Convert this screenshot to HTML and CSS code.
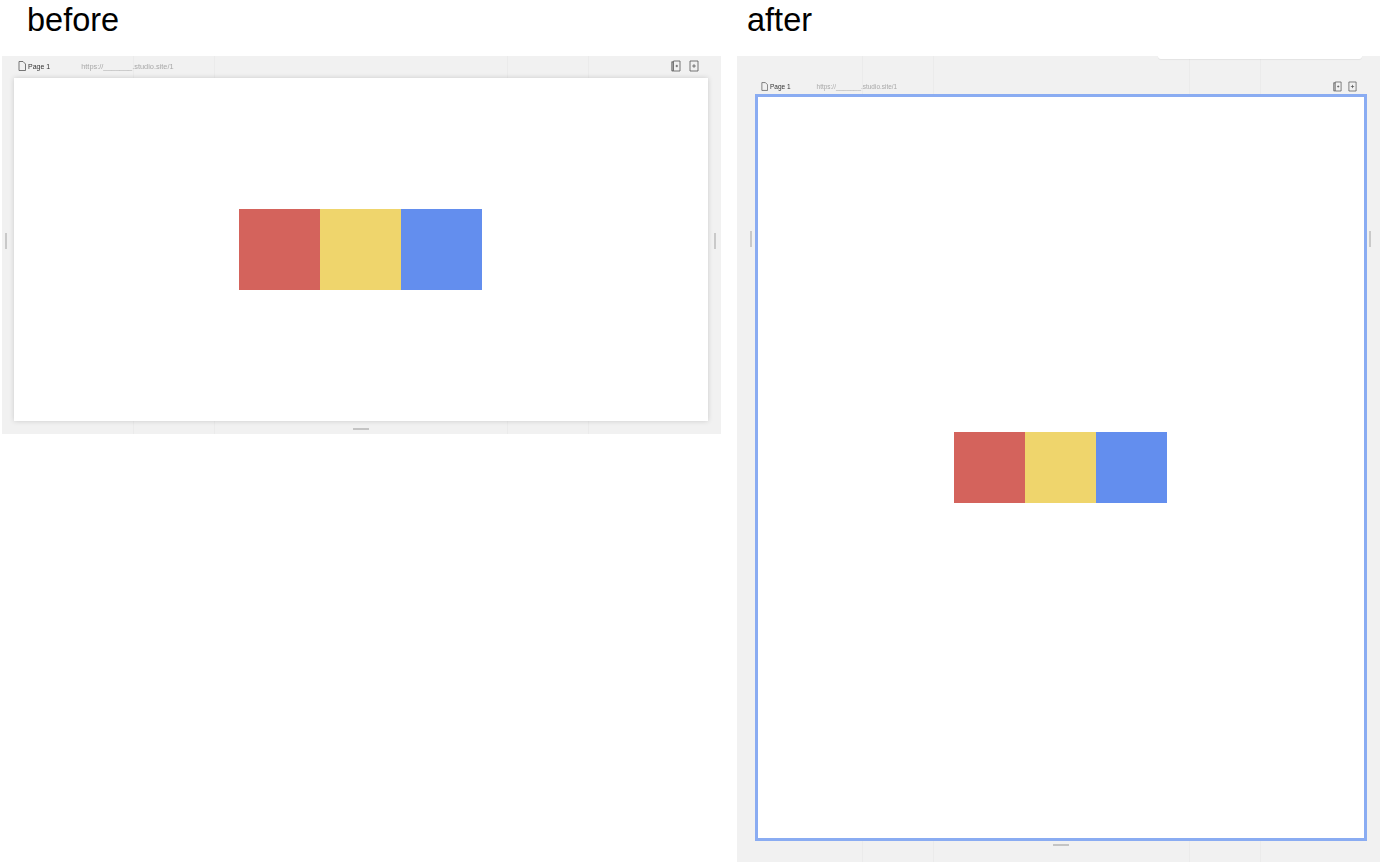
FILE: index.html
```html
<!DOCTYPE html>
<html lang="en">

<head>
	<meta charset="UTF-8">
	<meta name="viewport" content="width=device-width, initial-scale=1.0">
	<title>before / after</title>
	<link rel="stylesheet" href="styles.css">
</head>

<body>
	<div class="compare">
		<!-- before -->
		<section class="col">
			<h2 class="title">before</h2>
			<div class="panel panel-before">
				<div class="bar">
					<svg class="page-icon" viewBox="0 0 8 10"><path d="M1 .5h4l2.500 2.500v6.500h-6.500z"/></svg>
					<span class="page-name">Page 1</span>
					<span class="page-url">https://_______.studio.site/1</span>
					<div class="actions">
						<svg class="act" viewBox="0 0 10 12"><path d="M2.500 1h6.500v10h-6.500z"/><path d="M2.500 2h-1.500v8.500l1.500 .5" class="thick"/><path d="M5.800 4.800v2.400M4.600 6h2.400"/></svg>
						<svg class="act" viewBox="0 0 10 12"><path d="M1 1h8v10h-8z"/><path d="M5 4.200v3.600M3.200 6h3.600"/></svg>
					</div>
				</div>
				<div class="stage">
					<div class="side side-l"><i class="grip"></i></div>
					<div class="canvas">
						<div class="block red"></div>
						<div class="block yellow"></div>
						<div class="block blue"></div>
					</div>
					<div class="side side-r"><i class="grip"></i></div>
				</div>
				<div class="foot"><i class="grip-h"></i></div>
			</div>
		</section>

		<!-- after -->
		<section class="col">
			<h2 class="title">after</h2>
			<div class="panel panel-after">
				<div class="top-tab"></div>
				<div class="bar">
					<svg class="page-icon" viewBox="0 0 8 10"><path d="M1 .5h4l2.500 2.500v6.500h-6.500z"/></svg>
					<span class="page-name">Page 1</span>
					<span class="page-url">https://_______.studio.site/1</span>
					<div class="actions">
						<svg class="act" viewBox="0 0 10 12"><path d="M2.500 1h6.500v10h-6.500z"/><path d="M2.500 2h-1.500v8.500l1.500 .5" class="thick"/><path d="M5.800 4.800v2.400M4.600 6h2.400"/></svg>
						<svg class="act" viewBox="0 0 10 12"><path d="M1 1h8v10h-8z"/><path d="M5 4.200v3.600M3.200 6h3.600"/></svg>
					</div>
				</div>
				<div class="stage">
					<div class="side side-l"><i class="grip"></i></div>
					<div class="canvas">
						<div class="block red"></div>
						<div class="block yellow"></div>
						<div class="block blue"></div>
					</div>
					<div class="side side-r"><i class="grip"></i></div>
				</div>
				<div class="foot"><i class="grip-h"></i></div>
			</div>
		</section>
	</div>
</body>

</html>
```

FILE: styles.css
```css
* {
	margin: 0;
	padding: 0;
	box-sizing: border-box;
}

body {
	background: #fff;
	font-family: "Liberation Sans", Arial, sans-serif;
	overflow: hidden;
}

.compare {
	display: grid;
	grid-template-columns: 719px 643px;
	column-gap: 16px;
	padding-left: 2px;
	height: 862px;
}

.col {
	display: flex;
	flex-direction: column;
}

.title {
	height: 56px;
	font-size: 32.500px;
	font-weight: 400;
	line-height: 41px;
	color: #000;
}

.col:first-child .title {
	padding-left: 25px;
}

.col:last-child .title {
	padding-left: 10px;
}

/* the grey board, thin guide lines are background layers */
.panel {
	position: relative;
	display: flex;
	flex-direction: column;
	background-color: #f1f1f1;
	background-image:
		linear-gradient(#ebebeb, #ebebeb),
		linear-gradient(#ebebeb, #ebebeb),
		linear-gradient(#ebebeb, #ebebeb),
		linear-gradient(#ebebeb, #ebebeb);
	background-size: 1px 100%;
	background-repeat: no-repeat;
	filter: blur(.4px);
}

.panel-before {
	height: 378px;
	background-position: 131px 0, 212px 0, 505px 0, 586px 0;
}

.panel-after {
	height: 806px;
	background-position: 125px 0, 196px 0, 452px 0, 523px 0;
}

.top-tab {
	position: absolute;
	top: 0;
	left: 421px;
	width: 204px;
	height: 3px;
	background: #fff;
	border-radius: 0 0 4px 4px;
	box-shadow: 0 1px 1px rgba(0, 0, 0, .06);
}

.bar {
	display: flex;
	align-items: center;
}

.panel-before .bar {
	height: 22px;
	padding: 0 22px 2px 16px;
}

.panel-after .bar {
	height: 38px;
	padding: 22px 23px 0 24px;
}

.page-icon {
	fill: none;
	stroke: #555;
	stroke-width: .8;
	stroke-linejoin: round;
}

.panel-before .page-icon {
	width: 8px;
	height: 10px;
	margin-right: 2px;
}

.panel-after .page-icon {
	width: 7px;
	height: 9px;
	margin-right: 2px;
}

.page-name {
	color: #333;
}

.page-url {
	color: #a8a8a8;
}

.panel-before .page-name {
	font-size: 7px;
}

.panel-before .page-url {
	margin-left: 31px;
	font-size: 7.400px;
}

.panel-after .page-name {
	font-size: 6.500px;
}

.panel-after .page-url {
	margin-left: 26px;
	font-size: 6.450px;
}

.actions {
	display: flex;
	margin-left: auto;
}

.panel-before .actions {
	gap: 8px;
}

.panel-after .actions {
	gap: 6px;
}

.act {
	fill: none;
	stroke: #555;
	stroke-width: .8;
	stroke-linejoin: round;
}

.act .thick {
	stroke-width: 1.400;
	stroke: #777;
}

.panel-before .act {
	width: 10px;
	height: 12px;
}

.panel-after .act {
	width: 9px;
	height: 11px;
}

.stage {
	display: flex;
}

.panel-before .stage {
	height: 343px;
}

.panel-after .stage {
	height: 747px;
}

.side {
	flex: none;
}

.panel-before .side-l {
	width: 12px;
	padding: 155px 0 0 3px;
}

.panel-before .side-r {
	width: 13px;
	padding: 155px 0 0 6px;
}

.panel-after .side-l {
	width: 18px;
	padding: 137px 0 0 13px;
}

.panel-after .side-r {
	width: 13px;
	padding: 137px 0 0 2px;
}

.grip {
	display: block;
	width: 2px;
	height: 16px;
	background: #c9c9c9;
}

.canvas {
	flex: 1;
	display: flex;
	justify-content: center;
	align-items: center;
	padding-right: 1px;
	background: #fff;
}

.panel-before .canvas {
	box-shadow: 0 0 5px rgba(0, 0, 0, .16);
}

.panel-after .canvas {
	border: 3px solid #8aacf2;
}

.block {
	flex: none;
}

.panel-before .block {
	width: 81px;
	height: 81px;
}

.panel-after .block {
	width: 71px;
	height: 71px;
}

.red {
	background: #d4635c;
}

.yellow {
	background: #efd56c;
}

.blue {
	background: #638eee;
}

.foot {
	flex: 1;
	display: flex;
	justify-content: center;
}

.panel-before .foot {
	padding: 7px 1px 0 0;
}

.panel-after .foot {
	padding: 3px 0 0 4px;
}

.grip-h {
	display: block;
	width: 16px;
	height: 2px;
	background: #c4c4c4;
}
```
